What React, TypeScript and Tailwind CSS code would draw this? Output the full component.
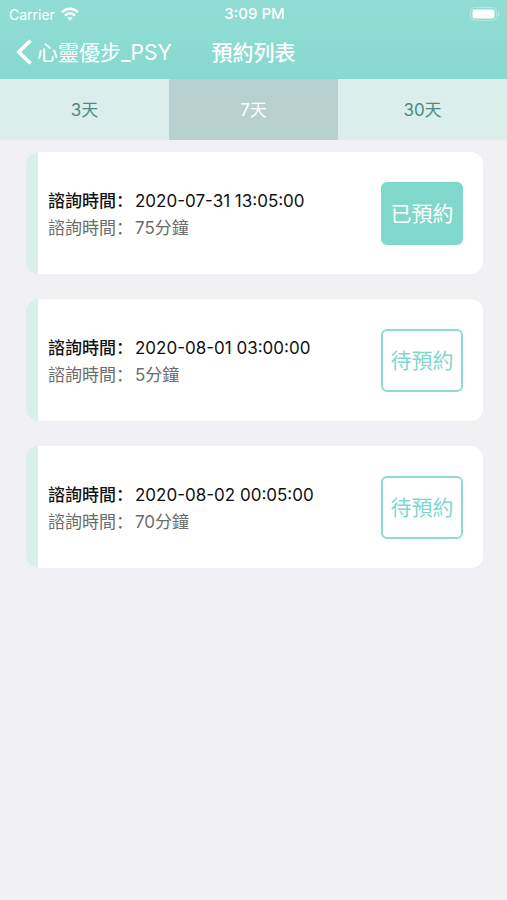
import { useState } from "react";

type Booking = { id: number; time: string; minutes: number; booked: boolean };

const ranges = ["3天", "7天", "30天"];

const bookings: Booking[] = [
  { id: 1, time: "2020-07-31 13:05:00", minutes: 75, booked: true },
  { id: 2, time: "2020-08-01 03:00:00", minutes: 5, booked: false },
  { id: 3, time: "2020-08-02 00:05:00", minutes: 70, booked: false },
];

function WifiIcon() {
  return (
    <svg width="18" height="14" viewBox="0 0 18 14" fill="none" stroke="white" strokeWidth="2.6" aria-hidden="true">
      <path d="M1 5.2C5.6.6 12.4.6 17 5.2" />
      <path d="M4 8.6c2.9-2.8 7.1-2.8 10 0" />
      <path d="M9 13.8 6.2 11c1.6-1.5 4-1.5 5.6 0Z" fill="white" stroke="none" />
    </svg>
  );
}

function BatteryIcon() {
  return (
    <svg width="30" height="14" viewBox="0 0 30 14" aria-hidden="true">
      <rect x="0.5" y="0.5" width="26" height="13" rx="4" fill="none" stroke="white" strokeOpacity="0.3" />
      <rect x="2.5" y="2.5" width="22" height="9" rx="2" fill="white" />
      <path d="M28 4.8c1.8.8 1.8 3.6 0 4.4Z" fill="white" fillOpacity="0.4" />
    </svg>
  );
}

function Field({ value, className, labelClassName = "" }: { value: string; className: string; labelClassName?: string }) {
  return (
    <div className={`flex ${className}`}>
      <dt className={`w-[87px] shrink-0 whitespace-nowrap ${labelClassName}`}>諮詢時間：</dt>
      <dd>{value}</dd>
    </div>
  );
}

function BookingCard({ booking }: { booking: Booking }) {
  return (
    <li className="flex h-[122px] items-center overflow-hidden rounded-xl bg-white pr-5">
      <span className="w-3 shrink-0 self-stretch bg-[#dbefeb]" />
      <dl className="ml-[10px] min-w-0 flex-1 pt-[3px] text-[17px] leading-[27px]">
        <Field value={booking.time} className="text-[#111111]" labelClassName="font-medium" />
        <Field value={`${booking.minutes}分鐘`} className="text-[#6c6c6c]" />
      </dl>
      <button
        type="button"
        className={`h-[63px] w-[82px] shrink-0 rounded-md border-2 pt-[2px] text-[21px] ${
          booking.booked ? "border-[#80d8cc] bg-[#80d8cc] text-white" : "border-[#8edcd1] bg-white text-[#80d8cc]"
        }`}
      >
        {booking.booked ? "已預約" : "待預約"}
      </button>
    </li>
  );
}

export default function App() {
  const [selected, setSelected] = useState(1);

  return (
    <div lang="zh-Hans" className="min-h-screen bg-[#f0f0f5] font-['Inter','Noto_Sans_CJK_SC',sans-serif]">
      <header className="bg-linear-to-b from-[#91ddd5] to-[#88d9d0] pb-[3px] text-white">
        <div className="grid h-7 grid-cols-[1fr_auto_1fr] items-center pr-[7px] pl-[9px] text-[14px]">
          <div className="flex items-center gap-[6px]">
            <span>Carrier</span>
            <WifiIcon />
          </div>
          <span className="text-[15px] font-medium">3:09 PM</span>
          <div className="flex justify-end">
            <BatteryIcon />
          </div>
        </div>
        <div className="grid h-12 grid-cols-[1fr_auto_1fr] items-center px-4 text-[21px]">
          <button type="button" className="flex items-center gap-[5px] whitespace-nowrap">
            <svg width="16" height="26" viewBox="0 0 16 26" fill="none" stroke="white" strokeWidth="3.6" aria-hidden="true">
              <path d="M14.5 1.5 2.8 13l11.7 11.5" />
            </svg>
            <span className="pt-[2px]">心靈優步_PSY</span>
          </button>
          <h1 className="pt-[2px] font-medium">預約列表</h1>
        </div>
      </header>

      <nav className="grid h-[61px] grid-cols-3 text-[17px]">
        {ranges.map((label, i) => (
          <button
            key={label}
            type="button"
            aria-pressed={i === selected}
            onClick={() => setSelected(i)}
            className={`pt-[3px] ${i === selected ? "bg-[#b8d0cf] text-white" : "bg-[#dbeeeb] text-[#4f8a80]"}`}
          >
            {label}
          </button>
        ))}
      </nav>

      <ul className="flex flex-col gap-[25px] pt-3 pr-6 pb-6 pl-[26px]">
        {bookings.map((booking) => (
          <BookingCard key={booking.id} booking={booking} />
        ))}
      </ul>
    </div>
  );
}
